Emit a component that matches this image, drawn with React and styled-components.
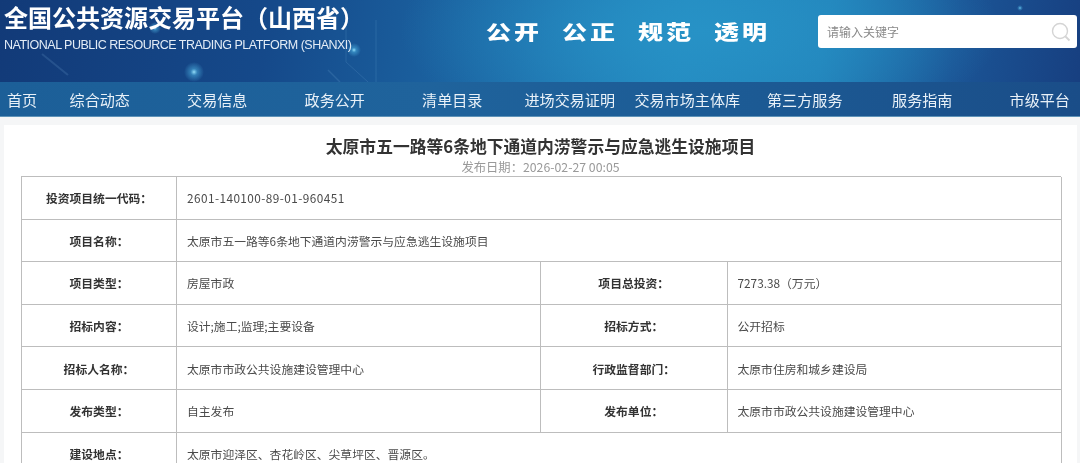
import React from "react";
import styled, { createGlobalStyle } from "styled-components";

const Global = createGlobalStyle`
  html, body { margin: 0; padding: 0; height: 463px; overflow: hidden; background: #f5f6f7; }
  #root { height: 463px; overflow: hidden; }
  * { box-sizing: border-box; }
`;

const cjk = `"Noto Sans CJK SC", "Noto Sans", sans-serif`;

const Page = styled.div`
  width: 1080px;
  font-family: ${cjk};
  background: #f5f6f7;
  filter: blur(0.35px);
`;

const Banner = styled.header`
  position: relative;
  height: 82px;
  overflow: hidden;
  display: grid;
  grid-template-columns: 486px 332px 259px;
  background:
    radial-gradient(ellipse 300px 120px at 700px 30px, #2792c6 0%, rgba(39, 146, 198, 0) 100%),
    linear-gradient(100deg, #123a78 0%, #15498a 25%, #1d6ba8 48%, #2388bf 63%, #2180b8 76%, #1b5596 88%, #173f80 100%);
`;

const Decor = styled.svg`
  position: absolute;
  inset: 0;
  width: 1080px;
  height: 82px;
`;

const Brand = styled.div`
  position: relative;
  padding: 2px 0 0 4px;
  color: #fff;
`;

const BrandTitle = styled.h1`
  margin: 0;
  font-size: 24px;
  line-height: 30px;
  font-weight: 700;
  white-space: nowrap;
`;

const BrandSub = styled.div`
  margin-top: 5px;
  font-family: "Liberation Sans", sans-serif;
  font-size: 12.5px;
  line-height: 16px;
  letter-spacing: -0.5px;
  color: #e3ecf6;
  white-space: nowrap;
`;

const Slogans = styled.div`
  position: relative;
  display: flex;
  gap: 20px;
  padding-top: 17px;
  align-items: flex-start;
`;

const Slogan = styled.span`
  display: block;
  width: 56px;
  font-size: 25px;
  line-height: 29px;
  font-weight: 900;
  letter-spacing: 3px;
  color: #fff;
  white-space: nowrap;
  transform: scaleY(0.8);
`;

const Search = styled.div`
  position: relative;
  margin-top: 15px;
  height: 33px;
  background: #fff;
  border-radius: 3px;
  display: flex;
  align-items: center;
  justify-content: space-between;
  padding: 0 6px 0 9px;
`;

const Placeholder = styled.span`
  font-size: 12px;
  color: #8a8a8a;
`;

const Nav = styled.nav`
  height: 35px;
  display: grid;
  grid-template-columns: 41px repeat(9, 117.5px);
  align-items: center;
  background: linear-gradient(90deg, #1c5f98 0%, #1f639c 40%, #1c5a94 70%, #1a4d88 100%);
  border-bottom: 1px solid #5f93b8;
`;

const NavItem = styled.a`
  display: block;
  text-align: center;
  font-size: 15.1px;
  line-height: 34px;
  color: #e9f1f8;
  white-space: nowrap;
  padding-left: ${(p) => (p.$first ? "3px" : "0")};
`;

const Card = styled.main`
  margin: 8px 3px 0 4px;
  background: #fff;
  padding: 8px 17px 0;
  height: 338px;
`;

const Title = styled.h2`
  margin: 0;
  text-align: center;
  font-size: 16.8px;
  line-height: 26px;
  font-weight: 700;
  color: #333;
`;

const DateLine = styled.div`
  text-align: center;
  font-size: 12.3px;
  line-height: 17px;
  color: #999;
`;

const Table = styled.div`
  width: 1040px;
  display: grid;
  grid-template-columns: 155px 364px 186.5px 334.5px;
  grid-auto-rows: 42.6px;
  border-top: 1px solid #bdbdbd;
  border-left: 1px solid #bdbdbd;
`;

const Cell = styled.div`
  display: flex;
  align-items: center;
  font-size: 11.8px;
  border-right: 1px solid #bdbdbd;
  border-bottom: 1px solid #bdbdbd;
  white-space: nowrap;
`;

const Label = styled(Cell)`
  justify-content: center;
  font-weight: 700;
  color: #333;
`;

const Value = styled(Cell)`
  padding-left: 10px;
  color: #4a4a4a;
  grid-column: span ${(p) => p.$span || 1};
  letter-spacing: ${(p) => (p.$code ? "0.43px" : "0")};
`;

const navItems = ["首页", "综合动态", "交易信息", "政务公开", "清单目录", "进场交易证明", "交易市场主体库", "第三方服务", "服务指南", "市级平台"];
const slogans = ["公开", "公正", "规范", "透明"];

const rows = [
  [["投资项目统一代码：", "2601-140100-89-01-960451", true]],
  [["项目名称：", "太原市五一路等6条地下通道内涝警示与应急逃生设施项目"]],
  [["项目类型：", "房屋市政"], ["项目总投资：", "7273.38（万元）"]],
  [["招标内容：", "设计;施工;监理;主要设备"], ["招标方式：", "公开招标"]],
  [["招标人名称：", "太原市市政公共设施建设管理中心"], ["行政监督部门：", "太原市住房和城乡建设局"]],
  [["发布类型：", "自主发布"], ["发布单位：", "太原市市政公共设施建设管理中心"]],
  [["建设地点：", "太原市迎泽区、杏花岭区、尖草坪区、晋源区。"]],
];

const Glow = ({ x, y, r }) => <circle cx={x} cy={y} r={r} fill="url(#glow)" />;

export default function App() {
  return (
    <Page>
      <Global />
      <Banner>
        <Decor viewBox="0 0 1080 82" aria-hidden="true">
          <defs>
            <radialGradient id="glow">
              <stop offset="0%" stopColor="#9fe6ff" stopOpacity="0.95" />
              <stop offset="35%" stopColor="#55c0ee" stopOpacity="0.45" />
              <stop offset="100%" stopColor="#55c0ee" stopOpacity="0" />
            </radialGradient>
          </defs>
          <g stroke="#7fb4dc" strokeOpacity="0.18" fill="none">
            <path d="M42 54 L68 75" strokeWidth="2" />
            <path d="M328 70 L340 82" strokeWidth="1.5" />
            <path d="M346 8 L346 62 L368 82" />
            <path d="M376 20 L376 82" />
          </g>
          <Glow x={194} y={72} r={10} />
          <Glow x={155} y={28} r={6} />
          <Glow x={354} y={50} r={7} />
          <Glow x={1020} y={8} r={3} />
        </Decor>
        <Brand>
          <BrandTitle>全国公共资源交易平台（山西省）</BrandTitle>
          <BrandSub>NATIONAL PUBLIC RESOURCE TRADING PLATFORM (SHANXI)</BrandSub>
        </Brand>
        <Slogans>
          {slogans.map((s) => (
            <Slogan key={s}>{s}</Slogan>
          ))}
        </Slogans>
        <Search>
          <Placeholder>请输入关键字</Placeholder>
          <svg width="20" height="20" viewBox="0 0 20 20" fill="none" stroke="#d4d4d4" strokeWidth="1.4" aria-hidden="true">
            <circle cx="9" cy="9" r="7.5" />
            <path d="M14.5 14.5 L18.5 18.5" strokeWidth="1.8" />
          </svg>
        </Search>
      </Banner>
      <Nav>
        {navItems.map((n, i) => (
          <NavItem key={n} $first={i === 0}>{n}</NavItem>
        ))}
      </Nav>
      <Card>
        <Title>太原市五一路等6条地下通道内涝警示与应急逃生设施项目</Title>
        <DateLine>发布日期：2026-02-27 00:05</DateLine>
        <Table>
          {rows.map((row) =>
            row.map(([label, value, code]) => (
              <React.Fragment key={label}>
                <Label>{label}</Label>
                <Value $span={row.length === 1 ? 3 : 1} $code={code}>{value}</Value>
              </React.Fragment>
            ))
          )}
        </Table>
      </Card>
    </Page>
  );
}
